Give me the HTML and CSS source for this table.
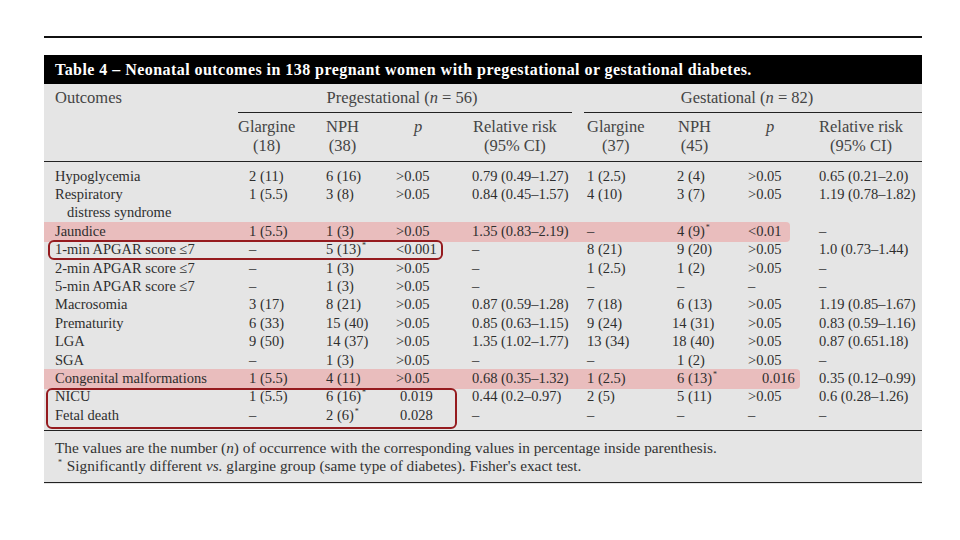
FILE: index.html
```html
<!DOCTYPE html>
<html lang="en">
<head>
<meta charset="utf-8">
<title>Table 4</title>
<link rel="stylesheet" href="styles.css">
</head>
<body>
<div class="page">
  <div class="rule-top"></div>
  <div class="title">Table 4 – Neonatal outcomes in 138 pregnant women with pregestational or gestational diabetes.</div>
  <div class="panel">
    <div class="mark pink pink-jaundice"></div>
    <div class="mark pink pink-congenital"></div>
    <div class="mark box box-apgar"></div>
    <div class="mark box box-nicu"></div>
    <table class="data">
      <colgroup>
        <col class="w0"><col class="w1"><col class="w2"><col class="w3"><col class="w4"><col class="w5"><col class="w6"><col class="w7"><col class="w8">
      </colgroup>
      <thead>
        <tr class="h1">
          <th class="lead">Outcomes</th>
          <th colspan="4" class="group"><div class="grp grp-pre">Pregestational (<i>n</i> = 56)</div></th>
          <th colspan="4" class="group"><div class="grp grp-ges">Gestational (<i>n</i> = 82)</div></th>
        </tr>
        <tr class="h2">
          <th></th>
          <th class="c1"><span class="stack">Glargine<br>(18)</span></th>
          <th class="c2"><span class="stack">NPH<br>(38)</span></th>
          <th class="c3"><i>p</i></th>
          <th class="c4"><span class="stack">Relative risk<br>(95% CI)</span></th>
          <th class="c5"><span class="stack">Glargine<br>(37)</span></th>
          <th class="c6"><span class="stack">NPH<br>(45)</span></th>
          <th class="c7"><i>p</i></th>
          <th class="c8"><span class="stack">Relative risk<br>(95% CI)</span></th>
        </tr>
      </thead>
      <tbody>
        <tr class="first"><td>Hypoglycemia</td><td>2 (11)</td><td>6 (16)</td><td>&gt;0.05</td><td>0.79 (0.49–1.27)</td><td>1 (2.5)</td><td>2 (4)</td><td>&gt;0.05</td><td>0.65 (0.21–2.0)</td></tr>
        <tr><td>Respiratory<br><span class="indent">distress syndrome</span></td><td>1 (5.5)</td><td>3 (8)</td><td>&gt;0.05</td><td>0.84 (0.45–1.57)</td><td>4 (10)</td><td>3 (7)</td><td>&gt;0.05</td><td>1.19 (0.78–1.82)</td></tr>
        <tr><td>Jaundice</td><td>1 (5.5)</td><td>1 (3)</td><td>&gt;0.05</td><td>1.35 (0.83–2.19)</td><td>–</td><td>4 (9)<sup>*</sup></td><td>&lt;0.01</td><td>–</td></tr>
        <tr><td>1-min APGAR score ≤7</td><td>–</td><td>5 (13)<sup>*</sup></td><td>&lt;0.001</td><td>–</td><td>8 (21)</td><td>9 (20)</td><td>&gt;0.05</td><td>1.0 (0.73–1.44)</td></tr>
        <tr><td>2-min APGAR score ≤7</td><td>–</td><td>1 (3)</td><td>&gt;0.05</td><td>–</td><td>1 (2.5)</td><td>1 (2)</td><td>&gt;0.05</td><td>–</td></tr>
        <tr><td>5-min APGAR score ≤7</td><td>–</td><td>1 (3)</td><td>&gt;0.05</td><td>–</td><td>–</td><td>–</td><td>–</td><td>–</td></tr>
        <tr><td>Macrosomia</td><td>3 (17)</td><td>8 (21)</td><td>&gt;0.05</td><td>0.87 (0.59–1.28)</td><td>7 (18)</td><td>6 (13)</td><td>&gt;0.05</td><td>1.19 (0.85–1.67)</td></tr>
        <tr><td>Prematurity</td><td>6 (33)</td><td>15 (40)</td><td>&gt;0.05</td><td>0.85 (0.63–1.15)</td><td>9 (24)</td><td class="wide">14 (31)</td><td>&gt;0.05</td><td>0.83 (0.59–1.16)</td></tr>
        <tr><td>LGA</td><td>9 (50)</td><td>14 (37)</td><td>&gt;0.05</td><td>1.35 (1.02–1.77)</td><td>13 (34)</td><td class="wide">18 (40)</td><td>&gt;0.05</td><td>0.87 (0.651.18)</td></tr>
        <tr><td>SGA</td><td>–</td><td>1 (3)</td><td>&gt;0.05</td><td>–</td><td>–</td><td>1 (2)</td><td>&gt;0.05</td><td>–</td></tr>
        <tr><td>Congenital malformations</td><td>1 (5.5)</td><td>4 (11)</td><td>&gt;0.05</td><td>0.68 (0.35–1.32)</td><td>1 (2.5)</td><td>6 (13)<sup>*</sup></td><td class="exact">0.016</td><td>0.35 (0.12–0.99)</td></tr>
        <tr><td>NICU</td><td>1 (5.5)</td><td>6 (16)<sup>*</sup></td><td class="exact-pre">0.019</td><td>0.44 (0.2–0.97)</td><td>2 (5)</td><td>5 (11)</td><td>&gt;0.05</td><td>0.6 (0.28–1.26)</td></tr>
        <tr class="last"><td>Fetal death</td><td>–</td><td>2 (6)<sup>*</sup></td><td class="exact-pre">0.028</td><td>–</td><td>–</td><td>–</td><td>–</td><td>–</td></tr>
      </tbody>
    </table>
    <div class="notes">
      <p>The values are the number (<i>n</i>) of occurrence with the corresponding values in percentage inside parenthesis.</p>
      <p class="star"><sup>*</sup> Significantly different <i>vs.</i> glargine group (same type of diabetes). Fisher's exact test.</p>
    </div>
  </div>
</div>
</body>
</html>
```

FILE: styles.css
```css
html, body {
  margin: 0;
  padding: 0;
  background: #ffffff;
}

.page {
  width: 878px;
  margin-left: 44px;
  padding-top: 36px;
  font-family: "Liberation Serif", "DejaVu Serif", serif;
  color: #2e2e2e;
}

.rule-top {
  height: 2px;
  background: #111111;
  margin-bottom: 17px;
}

.title {
  background: #000000;
  color: #ffffff;
  height: 29px;
  line-height: 30px;
  padding-left: 11px;
  font-weight: bold;
  font-size: 16px;
  letter-spacing: 0.45px;
  white-space: nowrap;
}

.panel {
  position: relative;
  background: #e5e5e5;
  padding-bottom: 1px;
}

.mark {
  position: absolute;
  z-index: 0;
}

.pink {
  background: #e9bdbd;
  border-radius: 0 4px 4px 0;
  left: 0;
  height: 20px;
}

.pink-jaundice {
  top: 138px;
  width: 746px;
}

.pink-congenital {
  top: 285px;
  width: 756px;
}

.box {
  border: 2.5px solid #951b1f;
  border-radius: 6px;
  z-index: 2;
  box-sizing: border-box;
}

.box-apgar {
  left: 4px;
  top: 156px;
  width: 395px;
  height: 20px;
}

.box-nicu {
  left: 2px;
  top: 304px;
  width: 411px;
  height: 41px;
}

.data {
  position: relative;
  z-index: 1;
  width: 878px;
  border-collapse: collapse;
  table-layout: fixed;
  font-size: 14.5px;
}

.w0 { width: 194px; }
.w1 { width: 80px; }
.w2 { width: 72px; }
.w3 { width: 72px; }
.w4 { width: 116px; }
.w5 { width: 84px; }
.w6 { width: 78px; }
.w7 { width: 70px; }
.w8 { width: 112px; }

.data th {
  font-weight: normal;
  font-size: 16.5px;
  color: #444444;
  text-align: left;
  padding: 0;
  vertical-align: top;
}

.h1 th {
  height: 29px;
}

.h1 .lead {
  padding-left: 11px;
  line-height: 27px;
}

.group {
  vertical-align: top;
}

.grp {
  line-height: 27px;
  height: 28px;
  text-align: center;
  border-bottom: 1.5px solid #222222;
}

.grp-pre {
  margin-right: 6px;
  padding-right: 6px;
}

.grp-ges {
  margin-left: 6px;
  padding-right: 12px;
}

.h2 th {
  height: 48px;
  line-height: 19px;
  padding-top: 4px;
  box-sizing: border-box;
  border-bottom: 1.5px solid #222222;
}

.stack {
  display: inline-block;
  text-align: center;
}

.h2 .c1 { padding-left: 0; }
.h2 .c2 { padding-left: 8px; }
.h2 .c3 { padding-left: 24px; }
.h2 .c4 { padding-left: 11px; }
.h2 .c5 { padding-left: 9px; }
.h2 .c6 { padding-left: 16px; }
.h2 .c7 { padding-left: 26px; }
.h2 .c8 { padding-left: 9px; }

.data td {
  padding: 0;
  line-height: 18.4px;
  vertical-align: top;
  white-space: nowrap;
}

.data td:nth-child(1) { padding-left: 11px; }
.data td:nth-child(2) { padding-left: 11px; }
.data td:nth-child(3) { padding-left: 8px; }
.data td:nth-child(4) { padding-left: 6px; }
.data td:nth-child(5) { padding-left: 10px; }
.data td:nth-child(6) { padding-left: 9px; }
.data td:nth-child(7) { padding-left: 15px; }
.data td:nth-child(8) { padding-left: 8px; }
.data td:nth-child(9) { padding-left: 9px; }

.data td.wide { padding-left: 10px; }
.data td.exact { padding-left: 22px; }
.data td.exact-pre { padding-left: 10px; }

.indent {
  padding-left: 12px;
}

.data tr.first td {
  padding-top: 5px;
}

.data tr.last td {
  padding-bottom: 6px;
  border-bottom: 1.5px solid #222222;
}

sup {
  font-size: 8px;
  line-height: 0;
  vertical-align: 6px;
  margin-left: 1px;
}

.notes {
  padding: 8px 11px 7px;
  font-size: 15.3px;
  line-height: 18px;
  color: #333333;
  border-bottom: 1.5px solid #222222;
}

.notes p {
  margin: 0;
  white-space: nowrap;
}

.notes .star {
  padding-left: 3px;
}

.notes .star sup {
  margin-left: 0;
  margin-right: 1px;
}
```
